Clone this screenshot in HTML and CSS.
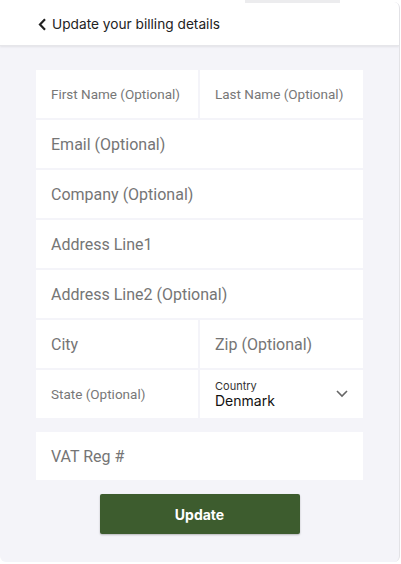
FILE: index.html
```html
<!DOCTYPE html>
<html>
<head>
<meta charset="utf-8">
<link rel="stylesheet" href="styles.css">
</head>
<body>
<div class="tabstrip"></div>
<div class="card">
  <header class="header">
    <svg class="back" width="9" height="13" viewBox="0 0 9 13"><path d="M7 1.3 L2 6.5 L7 11.7" fill="none" stroke="#222" stroke-width="2.2"/></svg>
    <span class="title">Update your billing details</span>
  </header>
  <main class="body">
    <div class="fields">
      <div class="row split">
        <div class="field small">First Name (Optional)</div>
        <div class="field small">Last Name (Optional)</div>
      </div>
      <div class="row"><div class="field">Email (Optional)</div></div>
      <div class="row"><div class="field">Company (Optional)</div></div>
      <div class="row"><div class="field">Address Line1</div></div>
      <div class="row"><div class="field">Address Line2 (Optional)</div></div>
      <div class="row split">
        <div class="field">City</div>
        <div class="field">Zip (Optional)</div>
      </div>
      <div class="row split">
        <div class="field small">State (Optional)</div>
        <div class="field select">
          <div class="sel-text">
            <span class="sel-label">Country</span>
            <span class="sel-value">Denmark</span>
          </div>
          <svg class="chev" width="12" height="8" viewBox="0 0 12 8"><path d="M1 1 L6 6 L11 1" fill="none" stroke="#666" stroke-width="1.6"/></svg>
        </div>
      </div>
    </div>
    <div class="fields vat"><div class="row"><div class="field">VAT Reg #</div></div></div>
    <div class="actions"><button class="btn">Update</button></div>
  </main>
</div>
</body>
</html>
```
FILE: styles.css
```css
html, body { margin: 0; padding: 0; background: #ffffff; }
body { width: 401px; height: 564px; overflow: hidden; position: relative; }
.tabstrip { position: absolute; top: 0; left: 245px; width: 95px; height: 3px; background: #ececee; }
.card {
  margin-top: 2px;
  width: 400px;
  height: 560px;
  border-right: 1px solid #e2e2e6;
  border-radius: 0 6px 6px 6px;
  background: #f4f4f9;
  box-sizing: border-box;
  overflow: hidden;
  display: flex;
  flex-direction: column;
}
.header {
  height: 44px;
  background: #ffffff;
  box-shadow: 0 1px 2px rgba(0,0,0,0.08);
  border-bottom: 1px solid #e6e6ea;
  box-sizing: border-box;
  display: flex;
  align-items: center;
  padding-left: 38px;
  gap: 5px;
  font-family: Inter, "Liberation Sans", sans-serif;
  font-size: 13.7px;
  color: #222;
}
.back { margin-top: 1px; }
.body {
  padding: 24px 36px 0 36px;
  display: flex;
  flex-direction: column;
}
.fields { display: flex; flex-direction: column; gap: 2px; }
.vat { margin-top: 14px; }
.row { display: grid; grid-template-columns: 1fr; height: 48px; }
.row.split { grid-template-columns: 162px 1fr; column-gap: 2px; }
.field {
  min-width: 0;
  box-sizing: border-box;
  background: #ffffff;
  display: flex;
  align-items: center;
  padding-left: 15px;
  font-family: Roboto, "Liberation Sans", sans-serif;
  font-size: 16px;
  color: #757575;
}
.field.small { font-size: 13.5px; color: #777; }
.select { justify-content: space-between; padding-right: 15px; }
.sel-text { display: flex; flex-direction: column; line-height: 1.2; margin-top: 1px; }
.sel-label { font-family: Inter, "Liberation Sans", sans-serif; font-size: 11px; color: #333; }
.sel-value { font-family: Inter, "Liberation Sans", sans-serif; font-size: 14px; color: #111; }
.actions { display: flex; justify-content: center; margin-top: 14px; }
.btn {
  width: 200px;
  height: 40px;
  background: #3d5c2e;
  border: none;
  border-radius: 2px;
  box-shadow: 0 1px 2px rgba(0,0,0,0.25);
  color: #ffffff;
  font-family: Inter, "Liberation Sans", sans-serif;
  font-weight: 700;
  font-size: 14px;
}
```
